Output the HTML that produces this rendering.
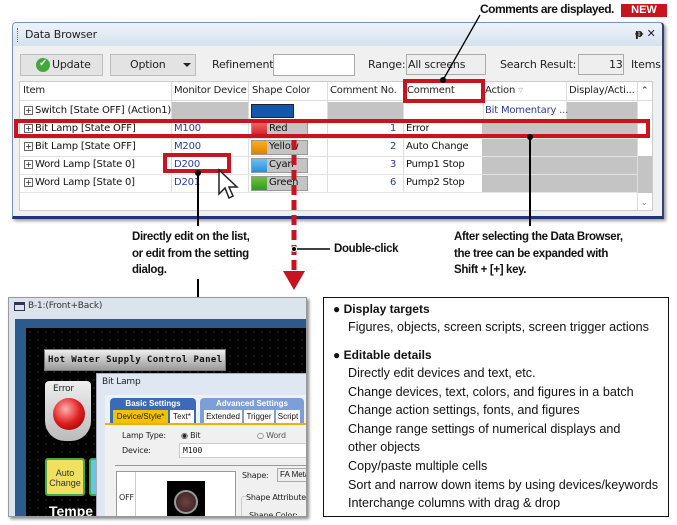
<!DOCTYPE html>
<html><head><meta charset="utf-8"><style>
*{margin:0;padding:0;box-sizing:border-box}
body{width:677px;height:525px;background:#fff;position:relative;overflow:hidden;font-family:"Liberation Sans",sans-serif;color:#111}
.a{position:absolute}
.ui{font-family:"DejaVu Sans","Liberation Sans",sans-serif;font-size:10.5px;color:#222;white-space:nowrap;letter-spacing:-0.2px}
.cell{position:absolute;height:18px;line-height:18px;font-family:"DejaVu Sans",sans-serif;font-size:10px;white-space:nowrap;overflow:hidden;letter-spacing:-0.2px}
.plus{display:inline-block;width:9px;height:9px;border:1px solid #666;font-size:8px;line-height:7px;text-align:center;margin-right:2px;vertical-align:middle;background:#fff}
.blue{color:#2a3c9a}
.gray{background:#c4c4c4}
.bt{font-weight:bold;font-size:12px;white-space:nowrap;position:absolute;line-height:16px}
.list{font-size:12.6px;line-height:18.6px;white-space:nowrap}
.ann{font-size:11.5px;font-weight:bold;line-height:16.5px;white-space:nowrap;letter-spacing:-0.35px}
</style></head><body>

<!-- Data Browser window -->
<div class="a" style="left:12px;top:22px;width:652px;height:197px;border:1px solid #7c93bb;border-bottom:3px solid #1d3577;border-right:2px solid #2b4480;border-radius:4px 4px 0 0;background:#f0f0f0;box-shadow:2px 2px 3px #999"></div>
<div class="a" style="left:13px;top:23px;width:649px;height:23px;background:linear-gradient(#eef3f9,#d7e2ef);border-radius:3px 3px 0 0"></div>
<div class="a" style="left:17px;top:28px;width:1px;height:14px;border-left:1px dotted #4a6a9a"></div>
<div class="a ui" style="left:25px;top:28px;font-size:11px">Data Browser</div>
<div class="a ui" style="left:635px;top:27px;font-size:11px;font-weight:bold">ᵽ ✕</div>

<!-- toolbar -->
<div class="a" style="left:20px;top:54px;width:83px;height:22px;background:#e3e3e3;border:1px solid #bdbdbd"></div>
<div class="a" style="left:36px;top:58px;width:14px;height:14px;border-radius:50%;background:#43a83c"></div>
<div class="a" style="left:39px;top:58px;color:#fff;font-size:10px;font-weight:bold">✓</div>
<div class="a ui" style="left:52px;top:58px;font-size:11px">Update</div>
<div class="a" style="left:110px;top:54px;width:86px;height:22px;background:#e3e3e3;border:1px solid #bdbdbd"></div>
<div class="a ui" style="left:130px;top:58px;font-size:11px">Option</div>
<div class="a" style="left:183px;top:63px;border-left:4px solid transparent;border-right:4px solid transparent;border-top:4px solid #222"></div>
<div class="a ui" style="left:212px;top:58px;font-size:11px">Refinement:</div>
<div class="a" style="left:273px;top:54px;width:82px;height:22px;background:#fff;border:1px solid #aaa"></div>
<div class="a ui" style="left:368px;top:58px;font-size:11px">Range:</div>
<div class="a" style="left:406px;top:54px;width:80px;height:21px;background:#eee;border:1px solid #aaa"></div>
<div class="a ui" style="left:408px;top:58px;font-size:11px">All screens</div>
<div class="a ui" style="left:500px;top:58px;font-size:11px">Search Result:</div>
<div class="a" style="left:578px;top:54px;width:46px;height:21px;background:#eee;border:1px solid #aaa"></div>
<div class="a ui" style="left:609px;top:58px;font-size:11px">13</div>
<div class="a ui" style="left:631px;top:58px;font-size:11px">Items</div>

<!-- table -->
<div class="a" style="left:19px;top:81px;width:634px;height:130px;background:#fff;border:1px solid #ccc"></div>
<div class="a" style="left:20px;top:82px;width:632px;height:19px;background:#fff;border-bottom:1px solid #ddd"></div>
<div class="cell ui" style="left:23px;top:82px">Item</div>
<div class="cell ui" style="left:174px;top:82px">Monitor Device</div>
<div class="cell ui" style="left:252px;top:82px">Shape Color</div>
<div class="cell ui" style="left:330px;top:82px">Comment No.</div>
<div class="cell ui" style="left:407px;top:82px">Comment</div>
<div class="cell ui" style="left:485px;top:82px">Action <span style="color:#bbb">▿</span></div>
<div class="cell ui" style="left:569px;top:82px">Display/Acti...</div>
<div class="cell ui" style="left:641px;top:82px;font-size:9px">⌃</div>
<div class="a" style="left:171px;top:82px;width:1px;height:110px;background:#ddd"></div>
<div class="a" style="left:248px;top:82px;width:1px;height:110px;background:#ddd"></div>
<div class="a" style="left:327px;top:82px;width:1px;height:110px;background:#ddd"></div>
<div class="a" style="left:403px;top:82px;width:1px;height:110px;background:#ddd"></div>
<div class="a" style="left:483px;top:82px;width:1px;height:110px;background:#ddd"></div>
<div class="a" style="left:566px;top:82px;width:1px;height:110px;background:#ddd"></div>
<div class="a" style="left:637px;top:82px;width:1px;height:128px;background:#ddd"></div>
<div class="a gray" style="left:172px;top:102px;width:76px;height:18px"></div>
<div class="a gray" style="left:328px;top:102px;width:75px;height:18px"></div>
<div class="a gray" style="left:567px;top:102px;width:70px;height:18px"></div>
<div class="a gray" style="left:482px;top:120px;width:155px;height:73px"></div>
<div class="a gray" style="left:638px;top:156px;width:14px;height:37px"></div>
<div class="a" style="left:484px;top:102px;width:82px;height:18px;background:#fff"></div>
<div class="a" style="left:20px;top:120px;width:617px;height:1px;background:#e3e3e3"></div>
<div class="a" style="left:20px;top:138px;width:617px;height:1px;background:#e3e3e3"></div>
<div class="a" style="left:20px;top:156px;width:617px;height:1px;background:#e3e3e3"></div>
<div class="a" style="left:20px;top:174px;width:617px;height:1px;background:#e3e3e3"></div>
<div class="a" style="left:20px;top:192px;width:617px;height:1px;background:#e3e3e3"></div>

<div class="cell" style="left:24px;top:102px"><span class="plus">+</span>Switch [State OFF] (Action1)</div>
<div class="cell" style="left:24px;top:120px"><span class="plus">+</span>Bit Lamp [State OFF]</div>
<div class="cell" style="left:24px;top:138px"><span class="plus">+</span>Bit Lamp [State OFF]</div>
<div class="cell" style="left:24px;top:156px"><span class="plus">+</span>Word Lamp [State 0]</div>
<div class="cell" style="left:24px;top:174px"><span class="plus">+</span>Word Lamp [State 0]</div>
<div class="cell blue" style="left:174px;top:120px">M100</div>
<div class="cell blue" style="left:174px;top:138px">M200</div>
<div class="cell blue" style="left:174px;top:156px">D200</div>
<div class="cell blue" style="left:174px;top:174px">D201</div>
<div class="a" style="left:251px;top:104px;width:43px;height:14px;background:#1456a8;border:1px solid #222"></div>
<div class="a" style="left:251px;top:122px;width:57px;height:15px;background:#c4c4c4;border:1px solid #999"></div>
<div class="a" style="left:252px;top:123px;width:15px;height:13px;background:linear-gradient(#f06060,#d01c24)"></div>
<div class="cell" style="left:269px;top:120px">Red</div>
<div class="a" style="left:251px;top:140px;width:57px;height:15px;background:#c4c4c4;border:1px solid #999"></div>
<div class="a" style="left:252px;top:141px;width:15px;height:13px;background:linear-gradient(#f8b020,#e08000)"></div>
<div class="cell" style="left:269px;top:138px">Yellow</div>
<div class="a" style="left:251px;top:158px;width:57px;height:15px;background:#c4c4c4;border:1px solid #999"></div>
<div class="a" style="left:252px;top:159px;width:15px;height:13px;background:linear-gradient(#6cc0f0,#2890d8)"></div>
<div class="cell" style="left:269px;top:156px">Cyan</div>
<div class="a" style="left:251px;top:176px;width:57px;height:15px;background:#c4c4c4;border:1px solid #999"></div>
<div class="a" style="left:252px;top:177px;width:15px;height:13px;background:linear-gradient(#70c040,#389820)"></div>
<div class="cell" style="left:269px;top:174px">Green</div>
<div class="cell blue" style="left:390px;top:120px">1</div>
<div class="cell blue" style="left:390px;top:138px">2</div>
<div class="cell blue" style="left:390px;top:156px">3</div>
<div class="cell blue" style="left:390px;top:174px">6</div>
<div class="cell" style="left:406px;top:120px">Error</div>
<div class="cell" style="left:406px;top:138px">Auto Change</div>
<div class="cell" style="left:406px;top:156px">Pump1 Stop</div>
<div class="cell" style="left:406px;top:174px">Pump2 Stop</div>
<div class="cell blue" style="left:485px;top:102px">Bit Momentary ...</div>
<div class="cell ui" style="left:641px;top:194px;font-size:8px;color:#888">⌄</div>

<div class="a" style="left:14px;top:119px;width:636px;height:19px;border:4px solid #c8141e"></div>
<div class="a" style="left:403px;top:79px;width:82px;height:24px;border:4px solid #c8141e"></div>
<div class="a" style="left:163px;top:153px;width:68px;height:20px;border:4px solid #c8141e"></div>
<svg class="a" style="left:216px;top:168px" width="24" height="36"><path d="M3 2 L3 26 L9 20 L13 30 L17 28 L13 19 L21 19 Z" fill="#fff" stroke="#222" stroke-width="1.5"/></svg>

<div class="a ann" style="left:480px;top:1px;font-size:12px;letter-spacing:-0.5px">Comments are displayed.</div>
<div class="a" style="left:621px;top:4px;width:46px;height:13px;background:#c8141e;color:#fff;font-size:11px;font-weight:bold;text-align:center;line-height:13px">NEW</div>
<svg class="a" style="left:0;top:0" width="677" height="525">
<line x1="480" y1="15" x2="443" y2="80" stroke="#000" stroke-width="1.3"/>
<circle cx="443" cy="80" r="3" fill="#000"/>
<line x1="198" y1="173" x2="198" y2="226" stroke="#000" stroke-width="2"/>
<circle cx="198" cy="173" r="3" fill="#000"/>
<line x1="198" y1="279" x2="198" y2="376" stroke="#000" stroke-width="2"/>
<circle cx="198" cy="376" r="3" fill="#000"/>
<line x1="530" y1="137" x2="530" y2="226" stroke="#000" stroke-width="2"/>
<circle cx="530" cy="137" r="3" fill="#000"/>
<line x1="294" y1="140" x2="294" y2="272" stroke="#c8141e" stroke-width="5" stroke-dasharray="10,5"/>
<polygon points="283,271 305,271 294,290" fill="#c8141e"/>
<line x1="294" y1="249" x2="330" y2="249" stroke="#000" stroke-width="1.5"/>
<circle cx="294" cy="249" r="2.5" fill="#000" stroke="#fff" stroke-width="1"/>
</svg>
<div class="a ann" style="left:132px;top:229px">Directly edit on the list,<br>or edit from the setting<br>dialog.</div>
<div class="a ann" style="left:334px;top:241px">Double-click</div>
<div class="a ann" style="left:454px;top:229px">After selecting the Data Browser,<br>the tree can be expanded with<br>Shift + [+] key.</div>

<!-- bottom-left screenshot -->
<div class="a" style="left:8px;top:297px;width:299px;height:220px;background:#dbe3ec;border:1px solid #999;box-shadow:2px 2px 3px #888;overflow:hidden">
  <div class="a" style="left:5px;top:4px;width:11px;height:9px;border:1px solid #335;border-top:3px solid #335"></div>
  <div class="a ui" style="left:19px;top:3px;font-size:9px;color:#333">B-1:(Front+Back)</div>
  <div class="a" style="left:6px;top:21px;width:300px;height:210px;background:#2d5a8c"></div>
  <div class="a" style="left:17px;top:30px;width:290px;height:200px;background:#000;background-image:radial-gradient(#555 0.6px,transparent 0.8px);background-size:8px 8px"></div>
  <div class="a" style="left:35px;top:51px;width:182px;height:22px;background:linear-gradient(#eee,#999);border:1px solid #777;color:#111;font-weight:bold;font-size:9px;line-height:20px;letter-spacing:0.4px;padding-left:3px;font-family:'DejaVu Sans Mono',monospace;white-space:nowrap;overflow:hidden">Hot Water Supply Control Panel</div>
  <div class="a" style="left:36px;top:83px;width:46px;height:60px;background:linear-gradient(#eee,#bbb);border-radius:4px 4px 20px 20px"></div>
  <div class="a ui" style="left:44px;top:86px;font-size:9px">Error</div>
  <div class="a" style="left:44px;top:100px;width:32px;height:32px;border-radius:50%;background:radial-gradient(circle at 40% 35%,#ffb0b0,#e02020 50%,#900 90%)"></div>
  <div class="a" style="left:36px;top:160px;width:40px;height:38px;background:#f0e060;border:2px solid #4a4;border-radius:3px;font-size:9px;text-align:center;line-height:10px;padding-top:8px;color:#333">Auto<br>Change</div>
  <div class="a" style="left:80px;top:160px;width:20px;height:38px;background:#60c8f0;border:2px solid #4a4;border-radius:3px"></div>
  <div class="a" style="left:40px;top:205px;color:#fff;font-weight:bold;font-size:14px">Tempe</div>
  <div class="a" style="left:87px;top:75px;width:220px;height:150px;background:#dfe8f2;border:1px solid #aab"></div>
  <div class="a ui" style="left:93px;top:79px;font-size:9px">Bit Lamp</div>
  <div class="a" style="left:96px;top:97px;width:210px;height:140px;background:#f0f0f0"></div>
  <div class="a" style="left:101px;top:100px;width:86px;height:26px;background:#3b6bb8;border-radius:4px 4px 0 0;color:#fff;font-size:8px;font-weight:bold;text-align:center;line-height:12px">Basic Settings</div>
  <div class="a" style="left:191px;top:100px;width:104px;height:26px;background:#7d9fd8;border-radius:4px 4px 0 0;color:#fff;font-size:8px;font-weight:bold;text-align:center;line-height:12px">Advanced Settings</div>
  <div class="a" style="left:104px;top:112px;width:55px;height:13px;background:#f5c000;font-size:8px;line-height:13px;text-align:center;color:#222">Device/Style*</div>
  <div class="a" style="left:161px;top:112px;width:24px;height:13px;background:#fff;font-size:8px;line-height:13px;text-align:center">Text*</div>
  <div class="a" style="left:195px;top:112px;width:38px;height:13px;background:#fff;font-size:8px;line-height:13px;text-align:center">Extended</div>
  <div class="a" style="left:235px;top:112px;width:30px;height:13px;background:#fff;font-size:8px;line-height:13px;text-align:center">Trigger</div>
  <div class="a" style="left:267px;top:112px;width:24px;height:13px;background:#fff;font-size:8px;line-height:13px;text-align:center">Script</div>
  <div class="a" style="left:96px;top:125px;width:210px;height:2px;background:#f0b000"></div>
  <div class="a ui" style="left:113px;top:133px;font-size:8px">Lamp Type:</div>
  <div class="a ui" style="left:172px;top:133px;font-size:8px">◉ Bit</div>
  <div class="a ui" style="left:248px;top:133px;font-size:8px;color:#555">○ Word</div>
  <div class="a ui" style="left:113px;top:148px;font-size:8px">Device:</div>
  <div class="a" style="left:170px;top:145px;width:140px;height:15px;background:#fff;border:1px solid #ccc;font-size:8px;line-height:13px;padding-left:3px;font-family:'DejaVu Sans Mono',monospace">M100</div>
  <div class="a" style="left:106px;top:167px;width:200px;height:1px;background:#999"></div>
  <div class="a" style="left:107px;top:173px;width:120px;height:60px;background:#fff;border:1px solid #999"></div>
  <div class="a" style="left:126px;top:174px;width:1px;height:60px;background:#ccc"></div>
  <div class="a ui" style="left:110px;top:195px;font-size:8px">OFF</div>
  <div class="a" style="left:158px;top:183px;width:38px;height:38px;background:#000"></div>
  <div class="a" style="left:165px;top:192px;width:24px;height:24px;border-radius:50%;background:radial-gradient(#704040,#302020);border:2px solid #999"></div>
  <div class="a" style="left:127px;top:227px;width:100px;height:5px;background:#3b82d8"></div>
  <div class="a ui" style="left:233px;top:173px;font-size:8px">Shape:</div>
  <div class="a" style="left:268px;top:170px;width:45px;height:14px;background:#eee;border:1px solid #aaa;font-size:8px;line-height:12px;padding-left:2px">FA Metal</div>
  <div class="a" style="left:232px;top:198px;width:80px;height:40px;border:1px solid #ccc;border-radius:3px"></div>
  <div class="a ui" style="left:237px;top:195px;font-size:8px;background:#f0f0f0">Shape Attribute</div>
  <div class="a ui" style="left:240px;top:213px;font-size:8px">Shape Color:</div>
</div>

<!-- right box -->
<div class="a" style="left:323px;top:297px;width:346px;height:220px;border:1px solid #111"></div>
<div class="bt" style="left:333px;top:301px">● Display targets</div>
<div class="a list" style="left:348px;top:318px">Figures, objects, screen scripts, screen trigger actions</div>
<div class="bt" style="left:333px;top:347px">● Editable details</div>
<div class="a list" style="left:348px;top:364px">Directly edit devices and text, etc.<br>Change devices, text, colors, and figures in a batch<br>Change action settings, fonts, and figures<br>Change range settings of numerical displays and<br>other objects<br>Copy/paste multiple cells<br>Sort and narrow down items by using devices/keywords<br>Interchange columns with drag &amp; drop</div>
</body></html>
